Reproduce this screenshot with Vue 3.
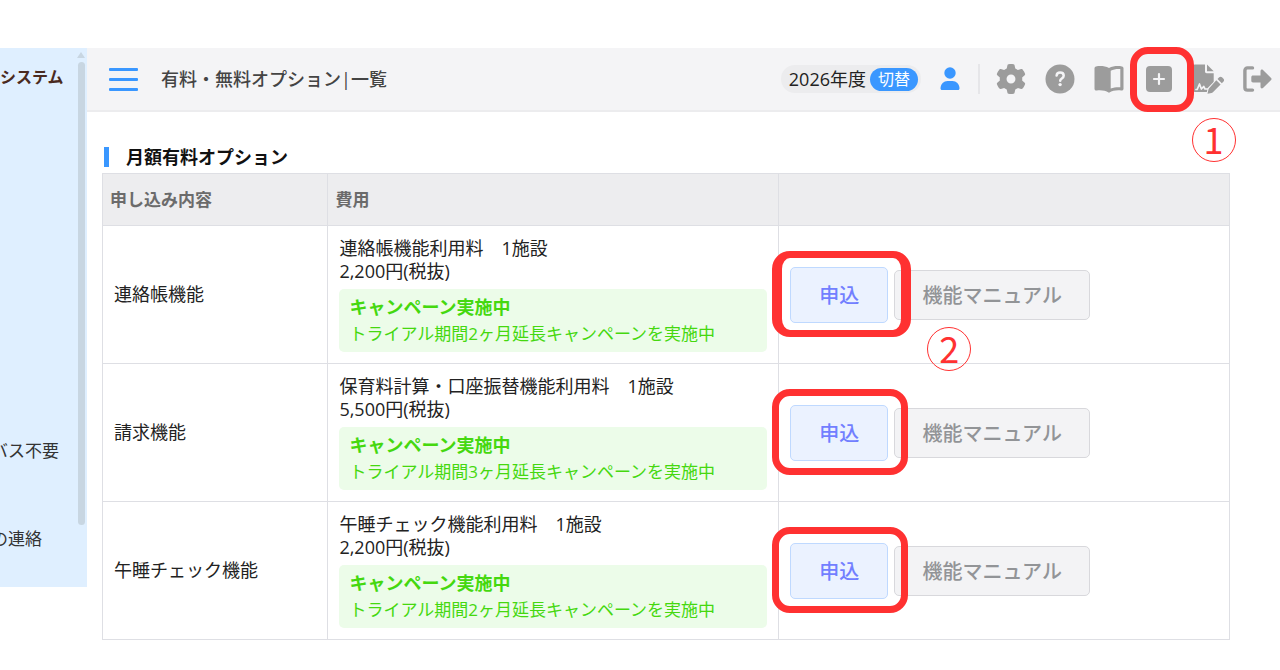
<script setup>
const sideItems = ['バス不要', 'の連絡']
const rows = [
  { name: '連絡帳機能', fee: '連絡帳機能利用料　1施設', price: '2,200円(税抜)', note: 'トライアル期間2ヶ月延長キャンペーンを実施中', step: '2' },
  { name: '請求機能', fee: '保育料計算・口座振替機能利用料　1施設', price: '5,500円(税抜)', note: 'トライアル期間3ヶ月延長キャンペーンを実施中' },
  { name: '午睡チェック機能', fee: '午睡チェック機能利用料　1施設', price: '2,200円(税抜)', note: 'トライアル期間2ヶ月延長キャンペーンを実施中' }
]
</script>

<template>
  <div class="page">
    <aside class="sidebar">
      <p class="brand">システム</p>
      <nav class="side-nav">
        <a v-for="item in sideItems" :key="item" href="#">{{ item }}</a>
      </nav>
      <div class="scrollbar">
        <svg viewBox="0 0 8 6" width="8" height="6"><path d="M4 0 8 6H0z" fill="#c8d6e2" /></svg>
        <span class="thumb"></span>
      </div>
    </aside>

    <main class="main">
      <header class="topbar">
        <button class="menu" type="button" aria-label="メニュー"><span></span><span></span><span></span></button>
        <h1>有料・無料オプション|一覧</h1>
        <div class="year">2026年度<button type="button">切替</button></div>
        <button class="icon user" type="button" aria-label="ユーザー">
          <svg viewBox="0 0 20 24" width="20" height="24" fill="#3a97ff"><circle cx="10" cy="6" r="5.7" /><path d="M.5 21.500c0-4.500 3.300-7.500 7-7.500h5c3.700 0 7 3 7 7.500 0 .9-.6 1.500-1.500 1.500H2c-.9 0-1.500-.6-1.500-1.500z" /></svg>
        </button>
        <div class="tools">
          <button class="icon" type="button" aria-label="設定">
            <svg viewBox="0 0 512 512" width="30" height="30"><path fill-rule="evenodd" d="M495.900 166.600c3.200 8.700 .5 18.400-6.400 24.600l-43.300 39.400c1.100 8.300 1.700 16.800 1.700 25.400s-.6 17.100-1.700 25.400l43.300 39.400c6.900 6.200 9.600 15.900 6.400 24.600c-4.400 11.900-9.700 23.300-15.800 34.300l-4.700 8.100c-6.600 11-14 21.400-22.100 31.200c-5.900 7.200-15.700 9.600-24.500 6.800l-55.700-17.700c-13.400 10.300-28.200 18.900-44 25.400l-12.500 57.100c-2 9.100-9 16.300-18.200 17.800c-13.800 2.300-28 3.500-42.500 3.500s-28.700-1.200-42.500-3.500c-9.200-1.500-16.200-8.700-18.200-17.800l-12.500-57.100c-15.800-6.500-30.600-15.100-44-25.400L83.100 425.900c-8.800 2.800-18.600 .3-24.500-6.800c-8.100-9.800-15.500-20.200-22.100-31.200l-4.700-8.100c-6.100-11-11.400-22.400-15.800-34.300c-3.200-8.700-.5-18.400 6.400-24.600l43.300-39.400C64.600 273.100 64 264.600 64 256s.6-17.100 1.700-25.400L22.400 191.200c-6.900-6.200-9.600-15.900-6.400-24.600c4.400-11.900 9.700-23.300 15.800-34.300l4.700-8.100c6.600-11 14-21.400 22.100-31.200c5.900-7.200 15.700-9.600 24.500-6.800l55.700 17.700c13.400-10.300 28.200-18.900 44-25.400l12.500-57.100c2-9.100 9-16.300 18.200-17.800C227.300 1.200 241.500 0 256 0s28.700 1.200 42.500 3.500c9.200 1.500 16.200 8.700 18.200 17.800l12.500 57.100c15.800 6.500 30.600 15.100 44 25.400l55.700-17.700c8.800-2.800 18.600-.3 24.500 6.800c8.100 9.800 15.500 20.200 22.100 31.200l4.700 8.100c6.100 11 11.400 22.400 15.800 34.300zM256 332a76 76 0 1 0 0-152 76 76 0 1 0 0 152z" /></svg>
          </button>
          <button class="icon" type="button" aria-label="ヘルプ">
            <svg viewBox="0 0 30 30" width="30" height="30"><circle cx="15" cy="15" r="14.500" /><path d="M11.600 11.600c.2-1.900 1.600-3 3.500-3 2.100 0 3.600 1.200 3.600 3.100 0 2.800-3.500 2.700-3.500 5" fill="none" stroke="#f4f4f6" stroke-width="2.500" stroke-linecap="round" /><circle cx="15.100" cy="20.600" r="1.700" fill="#f4f4f6" /></svg>
          </button>
          <button class="icon" type="button" aria-label="マニュアル">
            <svg viewBox="0 0 30 30" width="30" height="30"><path fill-rule="evenodd" d="M2 2.500C6 1.500 11 2 15 4c4-2 9-2.500 13-1.500 1 .2 1.500.9 1.500 1.800v20.400c0 1.300-1 2-2.200 1.800-4.300-.6-8.300-.1-12.300 2.200-4-2.300-8-2.800-12.300-2.200C1.500 26.700.5 26 .5 24.700V4.300c0-.9.5-1.600 1.500-1.800zM16.700 6.800v17.800c3.200-1.300 6.300-1.600 9.600-1.400V5.100c-3.400-.3-6.700.2-9.600 1.700z" /></svg>
          </button>
          <div class="spot">
            <button class="icon" type="button" aria-label="オプション">
              <svg viewBox="0 0 30 30" width="30" height="30"><rect x="2" y="2" width="26" height="26" rx="4" /><path d="M15 10v10M10 15h10" stroke="#f4f4f6" stroke-width="2.200" stroke-linecap="round" /></svg>
            </button>
            <span class="ring"></span>
            <span class="badge">1</span>
          </div>
          <button class="icon" type="button" aria-label="署名">
            <svg viewBox="0 0 32 30" width="32" height="30">
              <path d="M3 .5h10v7c0 1 .7 1.700 1.700 1.700h7V25c0 1.700-1.300 3-3 3H3c-1.700 0-3-1.300-3-3V3.500c0-1.700 1.300-3 3-3zM15 .5l6.700 6.700H15z" />
              <path d="M4 25.500h1.200l2.300-5.500 1.900 5 2.300-2.500 1.300 2.500h4" fill="none" stroke="#f4f4f6" stroke-width="1.700" stroke-linecap="round" stroke-linejoin="round" />
              <path d="m14.500 29.500 1.200-5.500L26.500 13c1.300-1.300 2.800-1.300 4.100 0l1 1c1.300 1.300 1.300 2.800 0 4.100L20.500 29.500z" fill="#f4f4f6" />
              <path d="m24.300 16.200 4.300 4.300-7.700 7.700c-.4.400-.9.600-1.400.7l-4 .9.900-4.100c.1-.5.400-1 .7-1.400zM25.500 15l1.700-1.700c.8-.8 2-.8 2.800 0l1.500 1.500c.8.8.8 2 0 2.800l-1.700 1.700z" />
            </svg>
          </button>
          <button class="icon" type="button" aria-label="ログアウト">
            <svg viewBox="0 0 30 30" width="30" height="30"><path d="M10.500 3.900H5.500c-1.500 0-2.600 1.100-2.600 2.600v17c0 1.500 1.100 2.600 2.600 2.600h5" fill="none" stroke="#9c9c9c" stroke-width="3.400" stroke-linecap="round" /><path d="M11 11.600h7.500V7.200c0-1.500 1.400-2.200 2.500-1.200l8.100 7.900c.6.600.6 1.500 0 2.100L21 24c-1.100 1-2.500.3-2.500-1.200v-4.400H11c-1 0-1.700-.7-1.700-1.700v-3.400c0-1 .7-1.700 1.700-1.700z" /></svg>
          </button>
        </div>
      </header>

      <section class="content">
        <h2>月額有料オプション</h2>
        <table>
          <thead>
            <tr><th class="c1">申し込み内容</th><th class="c2">費用</th><th class="c3"></th></tr>
          </thead>
          <tbody>
            <tr v-for="row in rows" :key="row.name">
              <td>{{ row.name }}</td>
              <td>
                <p>{{ row.fee }}</p>
                <p>{{ row.price }}</p>
                <div class="campaign">
                  <strong>キャンペーン実施中</strong>
                  <span>{{ row.note }}</span>
                </div>
              </td>
              <td>
                <div class="actions">
                  <div class="spot">
                    <button class="apply" type="button">申込</button>
                    <span class="ring" :class="{ wide: row.step }"></span>
                    <span v-if="row.step" class="badge">{{ row.step }}</span>
                  </div>
                  <button class="manual" type="button">機能マニュアル</button>
                </div>
              </td>
            </tr>
          </tbody>
        </table>
      </section>
    </main>
  </div>
</template>

<style>
body { margin: 0; background: #fff; }
</style>

<style scoped>
* { box-sizing: border-box; }
.page {
  display: flex;
  align-items: flex-start;
  padding-top: 48px;
  overflow: hidden;
  color: #222;
  font-family: "Open Sans", "Noto Sans CJK JP", sans-serif;
  font-size: 18px;
  line-height: 23px;
}
h1, h2, p { margin: 0; }
button { font-family: inherit; margin: 0; padding: 0; cursor: pointer; }

.sidebar {
  position: relative;
  flex: none;
  width: 87px;
  height: 539px;
  overflow: hidden;
  background: #dfefff;
  white-space: nowrap;
}
.brand { padding-top: 18px; color: #4a2a20; font-size: 16px; font-weight: 700; }
.side-nav { display: grid; gap: 65px; margin: 350px 0 0 -9px; }
.side-nav a { color: #333; font-size: 17px; text-decoration: none; }
.scrollbar {
  position: absolute;
  top: 4px;
  right: 2px;
  bottom: 62px;
  display: flex;
  flex-direction: column;
  align-items: center;
  gap: 4px;
}
.thumb { flex: 1; width: 7px; border-radius: 4px; background: #c8d6e2; }

.main { flex: 1; min-width: 0; }
.topbar {
  display: flex;
  align-items: center;
  height: 64px;
  padding: 0 8px 0 22px;
  background: #f4f4f6;
  border-bottom: 2px solid #ececee;
}
.menu {
  display: flex;
  flex-direction: column;
  gap: 7px;
  width: 29px;
  border: 0;
  background: none;
}
.menu span { width: 29px; height: 3px; border-radius: 1px; background: #3a97ff; }
h1 { margin: 0 auto 0 23px; color: #444; font-size: 18px; font-weight: 500; }
.year {
  display: flex;
  align-items: center;
  gap: 4px;
  height: 28px;
  padding: 0 3px 0 8px;
  border-radius: 14px;
  background: #ececee;
}
.year button {
  height: 23px;
  padding: 0 8px;
  border: 0;
  border-radius: 12px;
  background: #3a97ff;
  color: #fff;
  font-size: 16px;
  line-height: 23px;
}
.icon { display: flex; justify-content: center; width: 30px; border: 0; background: none; }
.icon svg { flex: none; fill: #9c9c9c; }
.icon.user { margin-left: 14px; }
.icon.user svg { fill: #3a97ff; }
.tools {
  display: flex;
  justify-content: space-between;
  width: 294px;
  margin-left: 13px;
  padding-left: 16px;
  border-left: 2px solid #e6e6e9;
}

.spot { position: relative; display: flex; }
.ring {
  position: absolute;
  inset: -17px -20px -18px -14px;
  z-index: 1;
  border: 7px solid #ff3131;
  border-radius: 18px;
  pointer-events: none;
}
.badge {
  position: absolute;
  top: 54px;
  left: 48px;
  width: 44px;
  height: 44px;
  border: 1px solid #ff3131;
  border-radius: 50%;
  color: #ff3131;
  font-family: "Noto Sans CJK JP", sans-serif;
  font-size: 36px;
  font-weight: 400;
  line-height: 38px;
  text-align: center;
}

.content { padding: 35px 50px 0 15px; }
h2 {
  margin-left: 2px;
  padding-left: 17px;
  border-left: 5px solid #3a97ff;
  color: #111;
  font-size: 18px;
  font-weight: 700;
  line-height: 20px;
}
table {
  width: 100%;
  margin-top: 6px;
  border-collapse: collapse;
  table-layout: fixed;
}
th, td { border: 1px solid #dedfe4; text-align: left; }
th {
  height: 52px;
  padding: 0 7px;
  background: #ededef;
  color: #6b6b6b;
  font-size: 17px;
}
.c1 { width: 20%; }
.c2, .c3 { width: 40%; }
td { padding: 11px; }
.campaign {
  display: grid;
  margin-top: 6px;
  padding: 5px 10px;
  border-radius: 5px;
  background: #ecfce9;
  color: #45d80f;
  line-height: 26px;
}
.campaign strong { line-height: 27px; }
.campaign span { font-size: 17px; }
.actions { display: flex; align-items: center; gap: 6px; }
.apply, .manual {
  border: 1px solid #bfd9ff;
  border-radius: 5px;
  background: #ebf2ff;
  color: #727fff;
  font-size: 20px;
  font-weight: 500;
}
.apply { width: 98px; height: 56px; }
.manual {
  width: 196px;
  height: 50px;
  border-color: #d8d8dc;
  background: #f3f3f5;
  color: #929497;
}
.actions .ring { inset: -16px -20px -14px -18px; }
.actions .ring.wide { right: -23px; border-width: 7px 10px; }
.actions .badge { top: 60px; left: 137px; }
</style>
